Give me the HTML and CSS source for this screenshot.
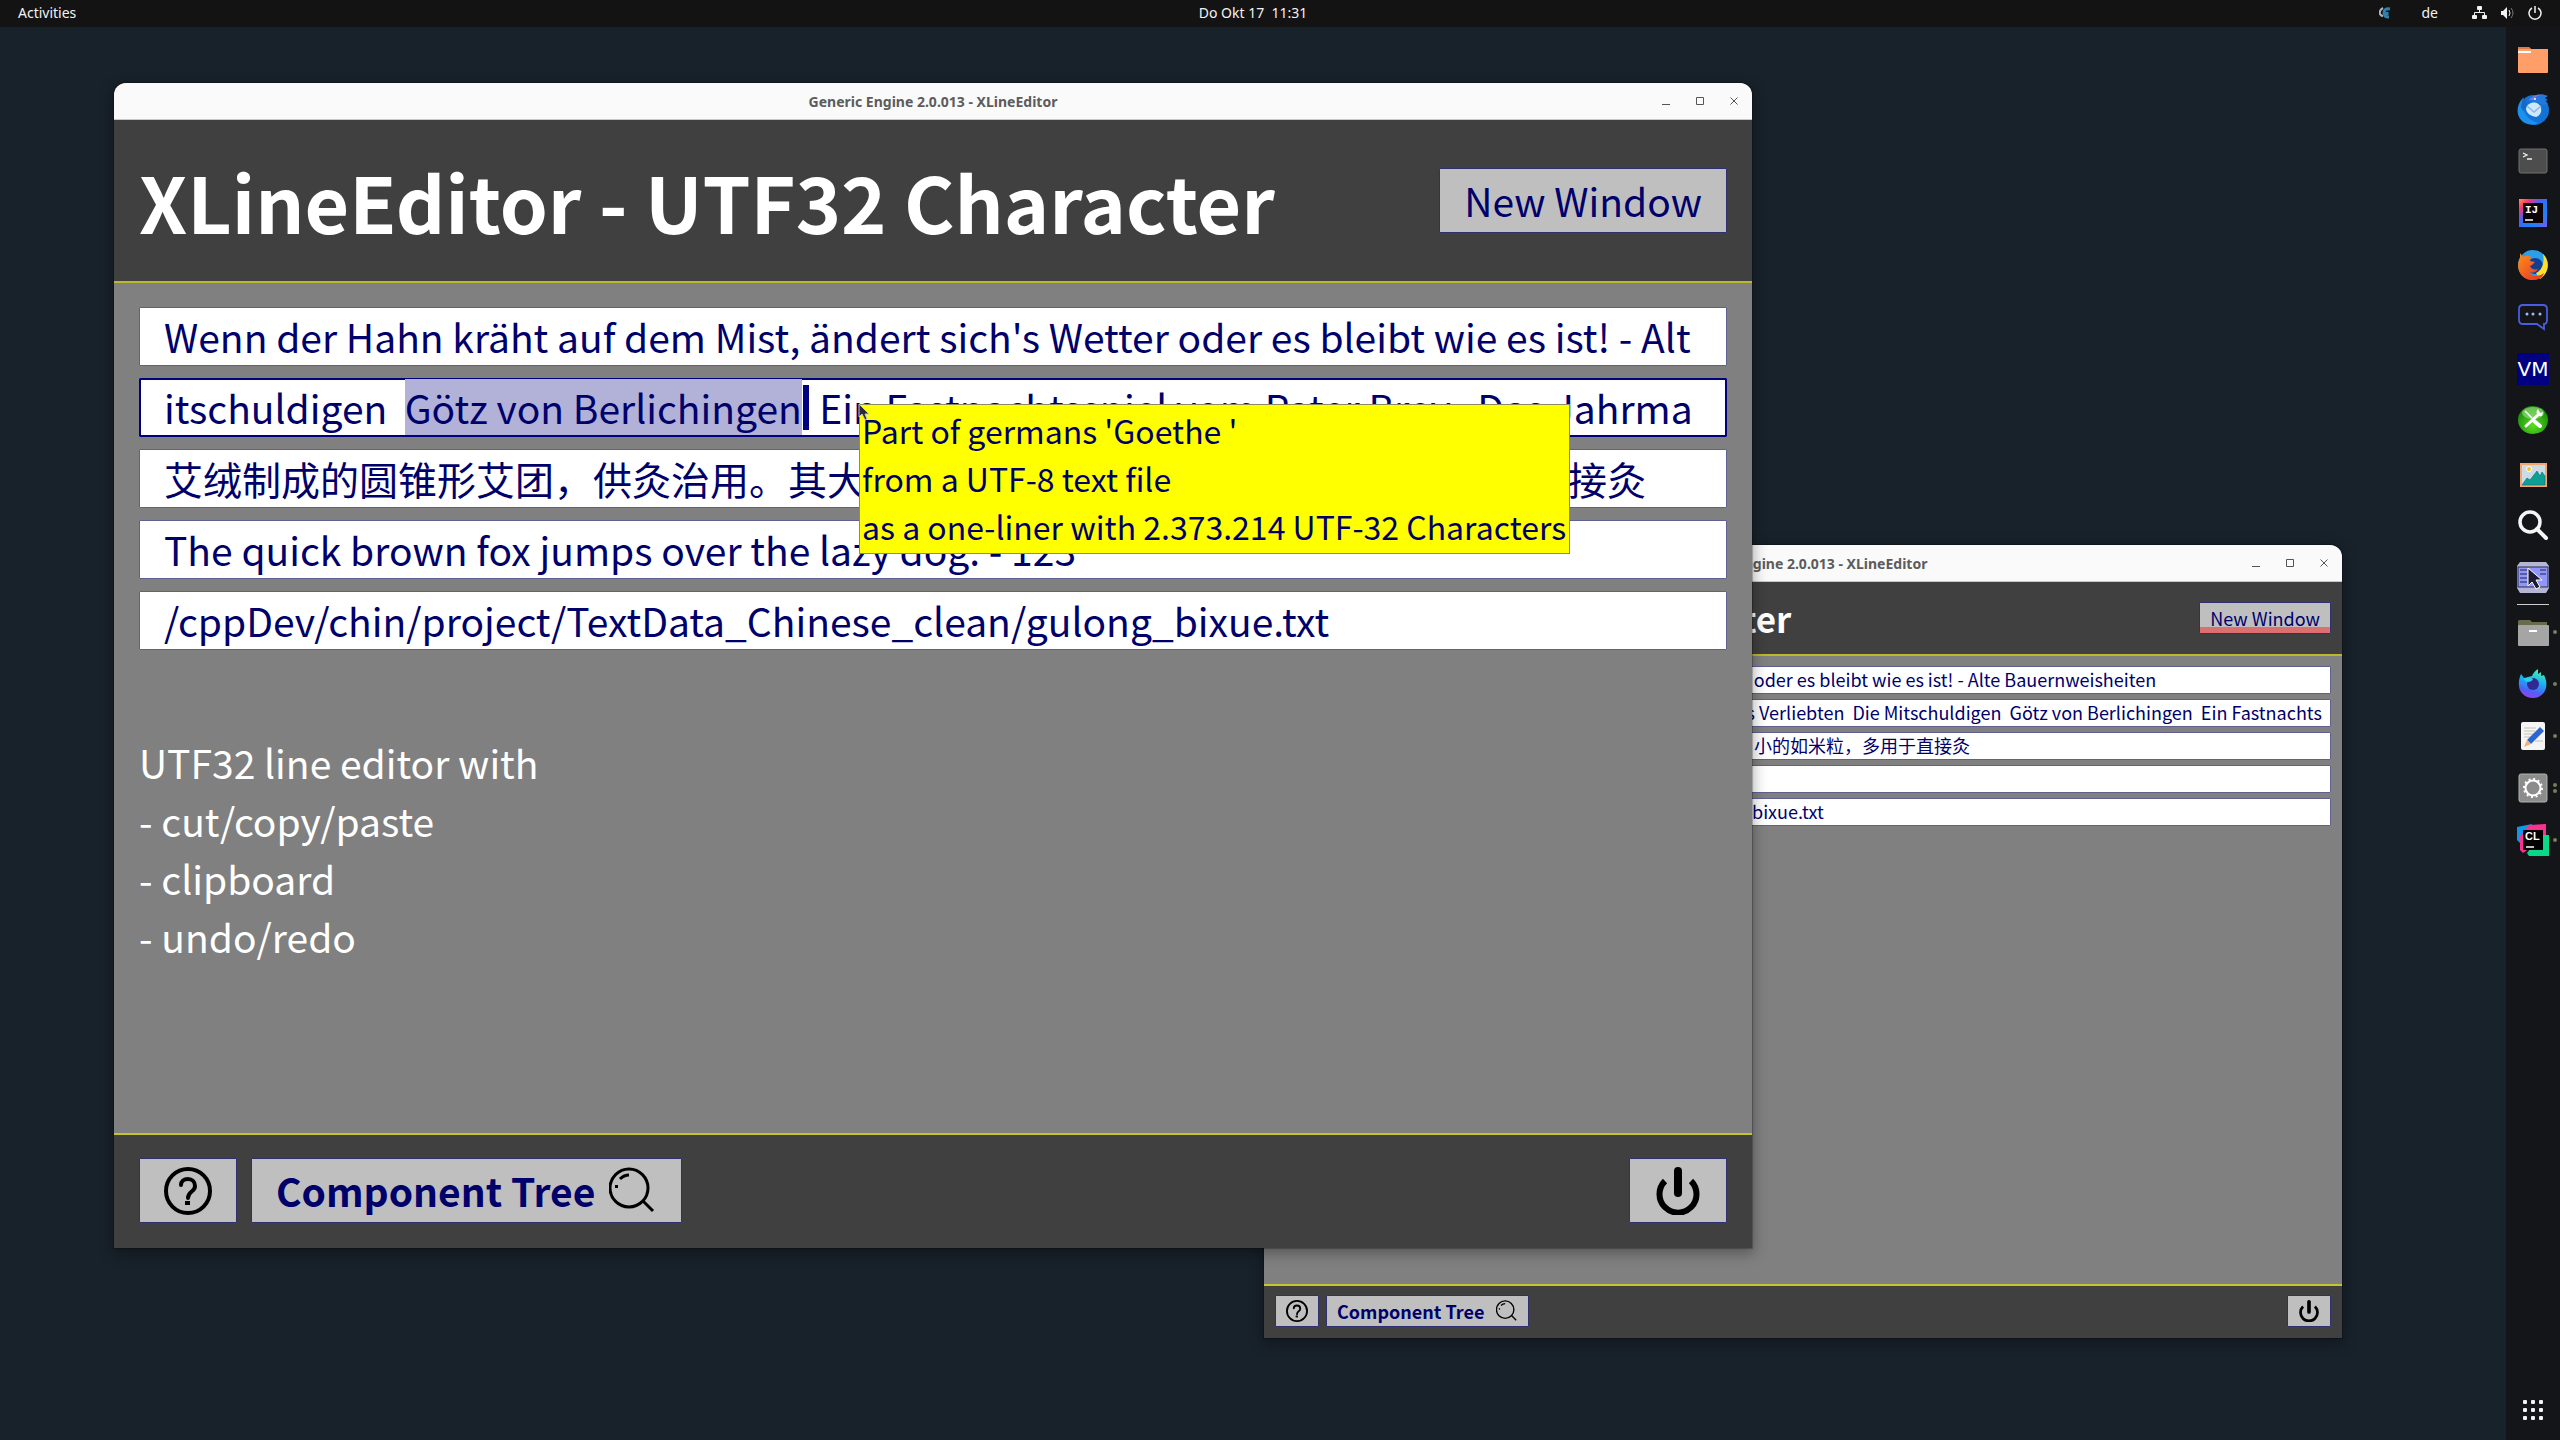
FILE: index.html
```html
<!DOCTYPE html>
<html lang="en">
<head>
  <meta charset="UTF-8">
  <meta name="viewport" content="width=device-width, initial-scale=1.0">
  <title>XLineEditor</title>
  <link rel="stylesheet" href="styles.css">
</head>
<body>
  <!-- shared icons -->
  <svg class="icon-defs" aria-hidden="true">
    <symbol id="icon-help" viewBox="0 0 48 48">
      <circle cx="24" cy="24" r="22" fill="none" stroke="#000" stroke-width="4"/>
      <path d="M17 18c0-4 3-6 7-6s7 3 7 7c0 6-7 5-7 12" fill="none" stroke="#000" stroke-width="4" stroke-linecap="round"/>
      <rect x="21" y="34" width="5" height="4" fill="#000"/>
    </symbol>
    <symbol id="icon-search" viewBox="0 0 48 48">
      <g fill="none" stroke="#000">
        <circle cx="20" cy="21" r="19" stroke-width="3"/>
        <path d="M11 12q4-4 9-4" stroke-width="3"/>
        <path d="M34 34l10 10" stroke-width="3"/>
      </g>
      <rect x="6" y="18" width="3" height="3" fill="#000"/>
    </symbol>
    <symbol id="icon-power" viewBox="0 0 48 48">
      <path d="M24 4v22" fill="none" stroke="#000" stroke-width="8" stroke-linecap="round"/>
      <path d="M11 14a18.5 18.5 0 1 0 26 0" fill="none" stroke="#000" stroke-width="6"/>
    </symbol>
  </svg>

  <header class="topbar">
    <a href="#" class="activities">Activities</a>
    <time class="clock">Do Okt 17&nbsp; 11:31</time>
    <div class="tray">
      <svg class="tray-app" viewBox="0 0 12 12" width="12" height="12">
        <path d="M4 1Q0 3 1 7q1 2 3 2" fill="none" stroke="#b5b5b5" stroke-width="2"/>
        <path d="M11 2Q5 1 5 6q0 4 5 4M8 5v3" fill="none" stroke="#2d83ad" stroke-width="3"/>
      </svg>
      <span class="lang">de</span>
      <svg viewBox="0 0 16 14" width="16" height="14" fill="#f2f2f2">
        <rect x="5" y="0" width="5" height="4" rx="1"/>
        <rect x="0" y="9" width="5" height="4" rx="1"/>
        <rect x="10" y="9" width="5" height="4" rx="1"/>
        <path d="M2.5 9V6.5h10V9M7.5 4v3" fill="none" stroke="#f2f2f2"/>
      </svg>
      <svg viewBox="0 0 16 14" width="16" height="14">
        <path d="M1 5h2l4-4v12L3 9H1z" fill="#f2f2f2"/>
        <path d="M9 4q2 3 0 6" fill="none" stroke="#f2f2f2"/>
        <path d="M11 2q4 5 0 10" fill="none" stroke="#777"/>
      </svg>
      <svg viewBox="0 0 14 14" width="14" height="14">
        <path d="M4 2a6 6 0 1 0 6 0M7 0v7" fill="none" stroke="#f2f2f2" stroke-width="1.5"/>
      </svg>
    </div>
  </header>

  <main class="desktop">
    <section class="window window-small">
      <div class="titlebar">
        <span class="title">Generic Engine 2.0.013 - XLineEditor</span>
        <div class="window-controls">
          <button type="button" aria-label="Minimize"><svg viewBox="0 0 10 10"><path d="M1 8.5h8"/></svg></button>
          <button type="button" aria-label="Maximize"><svg viewBox="0 0 10 10"><path d="M1.5 1.5h7v7h-7z"/></svg></button>
          <button type="button" aria-label="Close"><svg viewBox="0 0 10 10"><path d="M1.5 1.5l7 7M8.5 1.5l-7 7"/></svg></button>
        </div>
      </div>
      <div class="head">
        <h1>XLineEditor - UTF32 Character</h1>
        <button type="button" class="btn btn-marked">New Window</button>
      </div>
      <div class="content">
        <div class="fields">
          <input type="text" class="line" aria-label="Weather line" value="Wenn der Hahn kräht auf dem Mist, ändert sich's Wetter oder es bleibt wie es ist! - Alte Bauernweisheiten">
          <input type="text" class="line" aria-label="Goethe line" value="Johann Wolfgang von Goethe  Schriften 1  Die Laune des Verliebten  Die Mitschuldigen  Götz von Berlichingen  Ein Fastnachts">
          <input type="text" class="line" aria-label="Chinese line" value="艾绒制成的圆锥形艾团，供灸治用。其大小不一，大如枣，小的如米粒，多用于直接灸">
          <input type="text" class="line" aria-label="Pangram line" value="The quick brown fox jumps over the lazy dog. - 123">
          <input type="text" class="line" aria-label="File path line" value="/cppDev/chin/project/TextData_Chinese_clean/gulong_bixue.txt">
        </div>
      </div>
      <div class="foot">
        <button type="button" class="btn" aria-label="Help"><svg class="icon"><use href="#icon-help"/></svg></button>
        <button type="button" class="btn btn-tree">Component Tree<svg class="icon"><use href="#icon-search"/></svg></button>
        <button type="button" class="btn btn-power" aria-label="Quit"><svg class="icon"><use href="#icon-power"/></svg></button>
      </div>
    </section>

    <section class="window window-large">
      <div class="titlebar">
        <span class="title">Generic Engine 2.0.013 - XLineEditor</span>
        <div class="window-controls">
          <button type="button" aria-label="Minimize"><svg viewBox="0 0 10 10"><path d="M1 8.5h8"/></svg></button>
          <button type="button" aria-label="Maximize"><svg viewBox="0 0 10 10"><path d="M1.5 1.5h7v7h-7z"/></svg></button>
          <button type="button" aria-label="Close"><svg viewBox="0 0 10 10"><path d="M1.5 1.5l7 7M8.5 1.5l-7 7"/></svg></button>
        </div>
      </div>
      <div class="head">
        <h1>XLineEditor - UTF32 Character</h1>
        <button type="button" class="btn">New Window</button>
      </div>
      <div class="content">
        <div class="fields">
          <input type="text" class="line" aria-label="Weather line" value="Wenn der Hahn kräht auf dem Mist, ändert sich's Wetter oder es bleibt wie es ist! - Alt">
          <div class="active-line">
            <input type="text" class="line line-active" id="goethe" aria-label="Goethe line" aria-describedby="tip" value="itschuldigen  Götz von Berlichingen  Ein Fastnachtsspiel vom Pater Brey   Das Jahrma">
            <span class="caret"></span>
            <p class="tooltip" id="tip" role="tooltip">Part of germans 'Goethe '<br>from a UTF-8 text file<br>as a one-liner with 2.373.214 UTF-32 Characters</p>
            <svg class="pointer" viewBox="0 0 12 18" width="12" height="18">
              <path d="M1 1v13l3-3 3 6 2-1-2-5h4z" fill="#2a2a38" stroke="#c9c9c9" stroke-width="1"/>
            </svg>
          </div>
          <input type="text" class="line" aria-label="Chinese line" value="艾绒制成的圆锥形艾团，供灸治用。其大小不一，大如枣，小的如米粒，多用于直接灸">
          <input type="text" class="line" aria-label="Pangram line" value="The quick brown fox jumps over the lazy dog. - 123">
          <input type="text" class="line" aria-label="File path line" value="/cppDev/chin/project/TextData_Chinese_clean/gulong_bixue.txt">
        </div>
        <p class="about">UTF32 line editor with<br>- cut/copy/paste<br>- clipboard<br>- undo/redo</p>
      </div>
      <div class="foot">
        <button type="button" class="btn" aria-label="Help"><svg class="icon"><use href="#icon-help"/></svg></button>
        <button type="button" class="btn btn-tree">Component Tree<svg class="icon"><use href="#icon-search"/></svg></button>
        <button type="button" class="btn btn-power" aria-label="Quit"><svg class="icon"><use href="#icon-power"/></svg></button>
      </div>
    </section>
  </main>

  <nav class="dock">
    <button type="button" aria-label="Home folder">
      <svg viewBox="0 0 32 32">
        <path d="M1 6h11l2 2h17v4H1z" fill="#d87c48"/>
        <rect x="1" y="8" width="30" height="24" rx="1" fill="#ff9e68"/>
        <path d="M1 6h11l2 2H1z" fill="#d87c48"/>
        <rect x="1" y="10" width="13" height="2" fill="#fff"/>
      </svg>
    </button>
    <button type="button" aria-label="Thunderbird">
      <svg viewBox="0 0 32 32">
        <circle cx="17" cy="17" r="15" fill="#1272d8"/>
        <path d="M6 5c-8 8-7 20 2 25 5 2 10 2 13 0-9-3-13-8-15-14z" fill="#1b90ee"/>
        <path d="M6 4l4 7-4 7-2-4z" fill="#1668c0"/>
        <path d="M11 8C14 2 22 0 31 3l-3 2 3 2-3 1 3 3-5 1c-4-3-9-3-15-4z" fill="#2079dc"/>
        <path d="M12 7c4-5 10-6 16-5-6 0-9 1-11 5z" fill="#8a72d8"/>
        <path d="M9 16c1-8 13-9 15-1 1 5-2 8-5 9-5-1-9-3-10-8z" fill="#cfe7fc"/>
        <path d="M10 13l7 6 7-6" fill="none" stroke="#8cb6e6" stroke-width="1.5"/>
        <circle cx="18" cy="6" r="1" fill="#fff"/>
      </svg>
    </button>
    <button type="button" aria-label="Terminal">
      <svg viewBox="0 0 32 32">
        <rect x="2" y="4" width="28" height="24" rx="2" fill="#4d4d4d" stroke="#707070"/>
        <path d="M6 8l4 2-4 2M10 14h5" fill="none" stroke="#f0f0f0" stroke-width="1.3"/>
      </svg>
    </button>
    <button type="button" aria-label="IntelliJ IDEA">
      <svg viewBox="0 0 32 32">
        <linearGradient id="ij" x1="0" y1="0" x2="1" y2="1">
          <stop offset="0" stop-color="#ff9a32"/><stop offset=".2" stop-color="#fc3176"/>
          <stop offset=".4" stop-color="#4862f0"/><stop offset=".7" stop-color="#1783fa"/><stop offset="1" stop-color="#7a5bf0"/>
        </linearGradient>
        <rect x="2" y="2" width="28" height="28" fill="url(#ij)"/>
        <rect x="6" y="6" width="20" height="20" fill="#0b0208"/>
        <text x="8" y="16" class="logo-text logo-mono">IJ</text>
        <path d="M8 23h8" stroke="#fff" stroke-width="1.5"/>
      </svg>
    </button>
    <button type="button" aria-label="Firefox">
      <svg viewBox="0 0 32 32">
        <linearGradient id="ff" x1="0" y1="0" x2="1" y2="1">
          <stop offset="0" stop-color="#ff9218"/><stop offset=".7" stop-color="#ee4b22"/><stop offset="1" stop-color="#d93a2a"/>
        </linearGradient>
        <circle cx="16" cy="16" r="15" fill="#2d9fe6"/>
        <circle cx="18" cy="17" r="8" fill="#123f92"/>
        <path d="M26 5c8 8 5 20-3 25l-4-6c6-3 9-10 7-19z" fill="#ffdf2c"/>
        <path d="M3 4l3 4c3-2 6-1 8 0l-1 4 5 1-3 3-2 1c1 3 4 4 8 3-3 5-8 4-10 2 3 6 11 6 16 2-2 7-8 7-12 7C3 31-2 18 3 9z" fill="url(#ff)"/>
      </svg>
    </button>
    <button type="button" aria-label="Messages">
      <svg viewBox="0 0 32 32">
        <path d="M6 4h20q4 0 4 4v11q0 4-3 4v5l-7-5H6q-4 0-4-4V8q0-4 4-4z" fill="none" stroke="#4a5ce0" stroke-width="1.8"/>
        <g fill="#aab4ff"><circle cx="10" cy="13" r="1.5"/><circle cx="16" cy="13" r="1.5"/><circle cx="23" cy="13" r="1.5"/></g>
      </svg>
    </button>
    <button type="button" aria-label="VM">
      <svg viewBox="0 0 32 32">
        <rect width="32" height="32" fill="#000080"/>
        <text x="16" y="23" class="logo-text logo-vm">VM</text>
      </svg>
    </button>
    <button type="button" aria-label="Tools">
      <svg viewBox="0 0 32 32">
        <radialGradient id="tools" cx=".5" cy=".7" r=".6"><stop offset="0" stop-color="#58e020"/><stop offset="1" stop-color="#1d8f0c"/></radialGradient>
        <ellipse cx="16" cy="15" rx="15" ry="14" fill="url(#tools)"/>
        <ellipse cx="16" cy="8" rx="11" ry="6" fill="#a4e68c" opacity=".6"/>
        <path d="M9 21L22 9" stroke="#fff" stroke-width="3" stroke-linecap="round"/>
        <path d="M21 4c-3 3-1 8 4 7l1-4-3 1-1-2z" fill="#fff"/>
        <path d="M8 6l8 8" stroke="#fff" stroke-width="1.5"/>
        <path d="M17 16l6 5" stroke="#fff" stroke-width="4" stroke-linecap="round"/>
      </svg>
    </button>
    <button type="button" aria-label="Images">
      <svg viewBox="0 0 32 32">
        <rect x="4" y="7" width="25" height="22" fill="#c9dce8" stroke="#f7a46e" stroke-width="2"/>
        <circle cx="12" cy="12" r="2.5" fill="#f5c21b" stroke="#fff"/>
        <path d="M5 28l5-7 3 2 7-9 3 5 2-4 3 4v9z" fill="#0c9f94" stroke="#0b7069" stroke-width=".6"/>
      </svg>
    </button>
    <button type="button" aria-label="Search">
      <svg viewBox="0 0 32 32">
        <circle cx="13" cy="13" r="10" fill="none" stroke="#f5f5f5" stroke-width="3.5"/>
        <path d="M20 20l9 9" stroke="#f5f5f5" stroke-width="4" stroke-linecap="round"/>
      </svg>
    </button>
    <button type="button" aria-label="Component viewer">
      <svg viewBox="0 0 32 32">
        <path d="M3 1h26l3 4v22l-3 5H3l-3-5V5z" fill="#b4b6d4"/>
        <rect x="1" y="6" width="30" height="20" fill="#9096fa" stroke="#292c50"/>
        <path d="M3 9h7M3 13h7M3 17h7M3 21h7M23 9h6M23 13h6" stroke="#20224c"/>
        <path d="M11 7v18l4-4 4 7 4-2-4-7h6z" fill="#1d1b33" stroke="#fff"/>
      </svg>
    </button>
    <hr>
    <button type="button" aria-label="Files" class="running">
      <svg viewBox="0 0 32 32">
        <path d="M2 4h11l2 2h15v6H1V5z" fill="#6a6a4c"/>
        <rect x="1" y="9" width="31" height="21" rx="1" fill="#a5a5a5"/>
        <rect x="12" y="14" width="8" height="2" fill="#fff"/>
      </svg>
    </button>
    <button type="button" aria-label="Firefox Developer" class="running">
      <svg viewBox="0 0 32 32">
        <linearGradient id="fd" x1=".6" y1="0" x2=".3" y2="1">
          <stop offset="0" stop-color="#45f0b0"/><stop offset=".45" stop-color="#18a9f5"/><stop offset=".75" stop-color="#5060f5"/><stop offset="1" stop-color="#9a3ef0"/>
        </linearGradient>
        <path d="M4 6l3 4 8-2c1-3 3-5 6-7v5l3-2v4l3-1c6 12 0 23-11 23S-2 20 4 6z" fill="url(#fd)"/>
        <circle cx="16" cy="16" r="6" fill="#322a92"/>
        <path d="M6 11q7-3 10 0-1 3-6 3z" fill="#20d2ee"/>
      </svg>
    </button>
    <button type="button" aria-label="Text editor" class="running">
      <svg viewBox="0 0 32 32">
        <rect x="4" y="2" width="24" height="28" rx="2" fill="#f5f5f5"/>
        <path d="M7 8h12M7 11h11M7 14h10M7 17h8M18 21h8" stroke="#c2c2b0"/>
        <path d="M10 20L23 7l4 4-13 13z" fill="#2c66d4"/>
        <path d="M10 20l4 4-7 3z" fill="#f3b070"/>
      </svg>
    </button>
    <button type="button" aria-label="Settings" class="running running-two">
      <svg viewBox="0 0 32 32">
        <rect x="2" y="2" width="28" height="28" rx="2" fill="#8c8c8c" stroke="#b2b2aa"/>
        <circle cx="16" cy="16" r="9" fill="none" stroke="#fff" stroke-width="2" stroke-dasharray="2 2.7"/>
        <circle cx="16" cy="16" r="7.5" fill="none" stroke="#fff" stroke-width="2"/>
      </svg>
    </button>
    <button type="button" aria-label="CLion" class="running">
      <svg viewBox="0 0 32 32">
        <path d="M0 3l15-3-3 16-9 3-3-3z" fill="#0a9be8"/>
        <path d="M12 1l17-1v12L6 29l-3-3V12z" fill="#fc3090"/>
        <path d="M24 11h8v21H12l-2-3z" fill="#08d888"/>
        <rect x="6" y="6" width="20" height="20" fill="#000"/>
        <text x="8" y="16" class="logo-text">CL</text>
        <path d="M9 23h8" stroke="#fff" stroke-width="1.5"/>
      </svg>
    </button>
    <button type="button" aria-label="Show applications" class="apps">
      <svg viewBox="0 0 32 32" fill="#f2f2f2">
        <rect x="6" y="6" width="4" height="4" rx="1"/><rect x="14" y="6" width="4" height="4" rx="1"/><rect x="22" y="6" width="4" height="4" rx="1"/>
        <rect x="6" y="14" width="4" height="4" rx="1"/><rect x="14" y="14" width="4" height="4" rx="1"/><rect x="22" y="14" width="4" height="4" rx="1"/>
        <rect x="6" y="22" width="4" height="4" rx="1"/><rect x="14" y="22" width="4" height="4" rx="1"/><rect x="22" y="22" width="4" height="4" rx="1"/>
      </svg>
    </button>
  </nav>

  <script>
    const goethe = document.getElementById('goethe');
    const start = goethe.value.indexOf('Götz');
    const end = goethe.value.indexOf('  Ein');

    goethe.focus();
    goethe.setSelectionRange(start, end);
    goethe.scrollLeft = 0;
  </script>
</body>
</html>
```
FILE: styles.css
```css
* {
  box-sizing: border-box;
}
body {
  margin: 0;
  height: 100vh;
  display: grid;
  grid-template-columns: 1fr 54px;
  grid-template-rows: 27px 1fr;
  overflow: hidden;
  background-color: #18222b;
  font-family: "Noto Sans CJK SC", "Noto Sans", sans-serif;
}
button {
  font: inherit;
  cursor: pointer;
}
h1,
p {
  margin: 0;
}
.icon-defs {
  position: absolute;
  width: 0;
  height: 0;
}

/* top bar */
.topbar {
  grid-column: 1 / 3;
  display: grid;
  grid-template-columns: 1fr auto 1fr 54px;
  align-items: center;
  padding-bottom: 2px;
  background-color: #131313;
  color: #f2f2f2;
  font-family: "Noto Sans", sans-serif;
  font-size: 14px;
}
.activities {
  padding-left: 18px;
  color: inherit;
  text-decoration: none;
}
.tray {
  grid-column: 3 / 5;
  display: flex;
  align-items: center;
  justify-content: flex-end;
  gap: 12px;
  padding-right: 18px;
}
.tray-app {
  margin-right: 18px;
}
.lang {
  margin-right: 22px;
}

/* windows */
.desktop {
  position: relative;
}
.window {
  position: absolute;
  display: flex;
  flex-direction: column;
  border-radius: 12px 12px 0 0;
  box-shadow: 0 0 1px 1px rgba(0, 0, 0, 0.25), 0 4px 14px 2px rgba(0, 0, 0, 0.3);
  background-color: #808080;
}
.window-large {
  --text: 39px;
  --line: 57px;
  --heading: 77px;
  --heading-line: 113px;
  --pad: 25px;
  --pad-y: 24px;
  --foot-top: 23px;
  --gap: 12px;
  --foot-gap: 14px;
  --btn-x: 24px;
  --btn-y: 3px;
  --icon: 48px;
  --icon-gap: 14px;
  left: 114px;
  top: 56px;
  right: 754px;
  bottom: 192px;
}
.window-small {
  --text: 18px;
  --line: 26px;
  --heading: 35px;
  --heading-line: 52px;
  --pad: 11px;
  --pad-y: 10px;
  --foot-top: 9px;
  --gap: 5px;
  --foot-gap: 7px;
  --btn-x: 10px;
  --btn-y: 2px;
  --icon: 22px;
  --icon-gap: 12px;
  left: 1264px;
  top: 518px;
  right: 164px;
  bottom: 102px;
}
.titlebar {
  height: 37px;
  display: grid;
  grid-template-columns: 1fr auto 1fr;
  align-items: center;
  border-bottom: 1px solid #c8c8c8;
  border-radius: 12px 12px 0 0;
  background-color: #fafafa;
}
.title {
  grid-column: 2;
  color: #5c5c5c;
  font-family: "Noto Sans", sans-serif;
  font-size: 14px;
  font-weight: bold;
}
.window-controls {
  display: flex;
  justify-content: flex-end;
  gap: 24px;
  padding-right: 13px;
}
.window-controls button {
  display: flex;
  padding: 0;
  border: none;
  background: none;
}
.window-controls svg {
  width: 10px;
  height: 10px;
  fill: none;
  stroke: #555;
}
.head {
  display: flex;
  align-items: center;
  justify-content: space-between;
  padding: var(--pad-y) var(--pad);
  background-color: #404040;
}
h1 {
  color: #fff;
  font-size: var(--heading);
  line-height: var(--heading-line);
  white-space: nowrap;
}
.content {
  flex: 1;
  padding: var(--pad-y) var(--pad);
  border-top: 2px solid #bcb82c;
  border-bottom: 2px solid #c4c42c;
}
.foot {
  display: flex;
  gap: var(--foot-gap);
  padding: var(--foot-top) var(--pad) calc(var(--foot-top) + 2px);
  background-color: #404040;
}
.btn {
  display: flex;
  align-items: center;
  padding: var(--btn-y) var(--btn-x);
  border: 1px solid #303070;
  border-radius: 1px;
  background-color: #bfbfbf;
  color: #00006b;
  font-size: var(--text);
  line-height: var(--line);
  white-space: nowrap;
}
.btn-marked {
  background-image: linear-gradient(#dc7070, #dc7070);
  background-position: bottom;
  background-repeat: no-repeat;
  background-size: 100% 6px;
}
.btn-tree {
  gap: var(--icon-gap);
  font-weight: bold;
}
.btn-power {
  margin-left: auto;
}
.icon {
  width: var(--icon);
  height: var(--icon);
}

/* line editors */
.fields {
  display: grid;
  gap: var(--gap);
}
.line {
  width: 100%;
  height: calc(var(--line) + 2px);
  padding: 0 6px 2px var(--btn-x);
  border: 1px solid #606090;
  border-radius: 1px;
  outline: none;
  background-color: #fff;
  color: #00006b;
  font-family: inherit;
  font-size: var(--text);
  line-height: var(--line);
}
.active-line {
  position: relative;
  display: flex;
}
.line-active {
  border-color: #000080;
  box-shadow: inset 0 0 0 1px #000080;
  caret-color: transparent;
}
.line-active::selection {
  background-color: #b2b2d8;
  color: #00006b;
}
.caret {
  position: absolute;
  left: 664px;
  top: 7px;
  width: 6px;
  height: 45px;
  background-color: #000080;
}
.tooltip {
  position: absolute;
  left: 720px;
  top: 26px;
  z-index: 1;
  padding: 1px 3px 3px 2px;
  border: 1px solid #8c8c60;
  background-color: #ff0;
  color: #00006b;
  font-size: 32px;
  line-height: 48px;
  white-space: nowrap;
}
.pointer {
  position: absolute;
  left: 719px;
  top: 25px;
  z-index: 2;
}
.about {
  margin-top: 83px;
  color: #fff;
  font-size: var(--text);
  line-height: 58px;
}

/* dock */
.dock {
  display: flex;
  flex-direction: column;
  padding: 4px 0;
  background-color: #141518;
}
.dock button {
  position: relative;
  height: 52px;
  padding: 0;
  border: none;
  background: none;
}
.dock svg {
  display: block;
  width: 32px;
  height: 32px;
  margin: 0 auto;
}
.dock hr {
  width: 32px;
  height: 1px;
  margin: 1px auto;
  border: none;
  background-color: #ccc;
}
.dock .apps {
  margin-top: auto;
}
.running::after {
  content: "";
  position: absolute;
  right: 3px;
  top: 24px;
  width: 4px;
  height: 4px;
  border-radius: 50%;
  background-color: #7a7a5c;
}
.running-two::after {
  top: 21px;
  box-shadow: 0 6px #7a7a5c;
}
.logo-text {
  fill: #fff;
  font-family: "Liberation Sans", sans-serif;
  font-size: 11px;
  font-weight: bold;
}
.logo-mono {
  font-family: "Liberation Mono", monospace;
}
.logo-vm {
  font-family: "DejaVu Sans", sans-serif;
  font-size: 20px;
  font-weight: normal;
  text-anchor: middle;
}
```
